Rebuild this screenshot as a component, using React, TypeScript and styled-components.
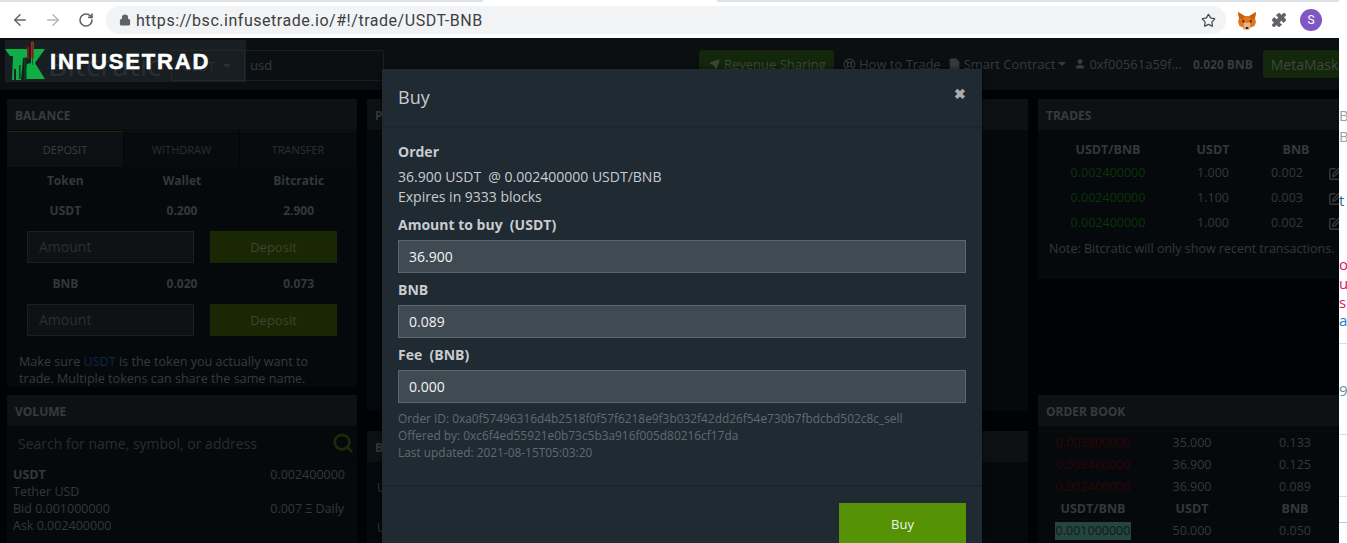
import styled, { createGlobalStyle } from 'styled-components'
import {
  ArrowLeft,
  ArrowRight,
  RotateCw,
  Lock,
  Star,
  Puzzle,
  Send,
  LifeBuoy,
  FileText,
  User,
  Search,
  SquarePen,
} from 'lucide-react'

const GlobalStyle = createGlobalStyle`
  html, body {
    margin: 0;
    padding: 0;
    width: 1347px;
    height: 543px;
    overflow: hidden;
    background: #fff;
    font-family: "Open Sans", "Noto Sans", sans-serif;
  }
  * { box-sizing: border-box; }
`

const Root = styled.div`
  position: relative;
  width: 1347px;
  height: 543px;
  overflow: hidden;
`

/* browser chrome */
const TabStrip = styled.div`
  display: flex;
  height: 2px;
  width: 1339px;
`
const StripPart = styled.div<{ $w: number; $white?: boolean }>`
  width: ${({ $w }) => $w}px;
  background: ${({ $white }) => ($white ? '#fff' : '#dee1e6')};
`
const Toolbar = styled.div`
  display: flex;
  align-items: center;
  height: 36px;
  background: #fff;
  padding-left: 11px;
  color: #5f6368;
`
const NavIcon = styled.div<{ $faded?: boolean }>`
  display: flex;
  justify-content: center;
  width: 18px;
  margin-right: 15px;
  color: ${({ $faded }) => ($faded ? '#b4b7ba' : '#5f6368')};
`
const UrlBar = styled.div`
  display: flex;
  align-items: center;
  width: 1120px;
  height: 28px;
  margin-left: -4px;
  padding: 0 10px 0 13px;
  border-radius: 14px;
  background: #f1f3f4;
`
const UrlText = styled.span`
  margin-left: 5px;
  flex: 1;
  font-family: Roboto, sans-serif;
  font-size: 16px;
  letter-spacing: 0.53px;
  color: #3c4043;
`
const ExtIcons = styled.div`
  display: flex;
  align-items: center;
  margin-left: 11px;
`
const FoxSlot = styled.div`
  display: flex;
  width: 20px;
  margin-right: 14px;
`
const PuzzleSlot = styled.div`
  display: flex;
  width: 16px;
  margin-right: 13px;
  color: #5f6368;
`
const Avatar = styled.div`
  display: flex;
  align-items: center;
  justify-content: center;
  width: 22px;
  height: 22px;
  border-radius: 50%;
  background: #7e57c2;
  color: #fff;
  font-family: Roboto, sans-serif;
  font-size: 12px;
`

/* page behind the dialog */
const Stage = styled.div`
  display: flex;
  height: 505px;
`
const Page = styled.div`
  width: 1339px;
  height: 505px;
  overflow: hidden;
  background: #000306;
`
const Sliver = styled.div`
  width: 8px;
  height: 505px;
  overflow: hidden;
  background: #fff;
  font-family: "Open Sans", sans-serif;
  font-size: 15px;
  white-space: nowrap;
`
const SliverText = styled.div<{ $gap: number; $color: string }>`
  height: 18px;
  line-height: 18px;
  margin-top: ${({ $gap }) => $gap}px;
  color: ${({ $color }) => $color};
`
const SliverRule = styled.div<{ $gap: number; $color: string }>`
  height: 1px;
  margin-top: ${({ $gap }) => $gap}px;
  background: ${({ $color }) => $color};
`

const Nav = styled.div`
  display: flex;
  align-items: flex-start;
  height: 52px;
  padding: 12px 0 0 48px;
  background: #0b0f12;
  color: #363b3e;
  white-space: nowrap;
`
const BrandText = styled.div`
  width: 123px;
  font-size: 30px;
  line-height: 30px;
  color: #24292c;
`
const PickBox = styled.div`
  display: flex;
  align-items: center;
  gap: 8px;
  width: 74px;
  height: 31px;
  padding-left: 10px;
  border: 1px solid #1a1f22;
  border-radius: 3px 0 0 3px;
  font-size: 13px;
  color: #24292c;
`
const Caret = styled.span`
  border-top: 4px solid currentColor;
  border-left: 4px solid transparent;
  border-right: 4px solid transparent;
`
const SearchBox = styled.div`
  width: 139px;
  height: 31px;
  padding-left: 5px;
  border: 1px solid #1a1f22;
  border-left: 0;
  border-radius: 0 3px 3px 0;
  font-size: 13px;
  line-height: 29px;
  color: #363b3e;
`
const NavRight = styled.div`
  display: flex;
  align-items: center;
  margin-left: 315px;
  font-size: 13px;
  height: 28px;
`
const GreenBtn = styled.div<{ $w: number; $size?: number; $ml?: number }>`
  display: flex;
  align-items: center;
  gap: 4px;
  flex: none;
  width: ${({ $w }) => $w}px;
  height: 28px;
  margin-left: ${({ $ml }) => $ml ?? 0}px;
  padding-left: ${({ $ml }) => ($ml ? 8 : 10)}px;
  border-radius: 3px;
  background: #13280a;
  font-size: ${({ $size }) => $size ?? 13}px;
  color: #3b4740;
  overflow: hidden;
`
const NavLink = styled.span<{ $ml: number }>`
  display: inline-flex;
  align-items: center;
  gap: 3px;
  margin-left: ${({ $ml }) => $ml}px;
`
const NavBold = styled.span`
  margin-left: 11px;
  font-size: 12px;
  font-weight: 700;
`

const Columns = styled.div`
  display: grid;
  grid-template-columns: 350px 661px 301px;
  column-gap: 10px;
  padding: 9px 0 0 7px;
`
const Column = styled.div`
  display: flex;
  flex-direction: column;
`
const Panel = styled.div<{ $h: number; $mt?: number }>`
  height: ${({ $h }) => $h}px;
  margin-top: ${({ $mt }) => $mt ?? 0}px;
  background: #06090c;
  overflow: hidden;
  flex: none;
`
const PanelHead = styled.div`
  height: 32px;
  padding: 1px 0 0 8px;
  background: #0e1113;
  border-bottom: 1px solid #050709;
  font-size: 12px;
  font-weight: 700;
  line-height: 31px;
  color: #363b3e;
`
const Tabs = styled.div`
  display: grid;
  grid-template-columns: 117px 116px 117px;
  height: 35px;
  border-bottom: 1px solid #030507;
`
const TabItem = styled.div<{ $active?: boolean }>`
  text-align: center;
  font-size: 11px;
  line-height: 35px;
  color: ${({ $active }) => ($active ? '#3a3f42' : '#2a2e31')};
  background: ${({ $active }) => ($active ? '#0c1012' : '#080b0e')};
  border-top: 1px solid ${({ $active }) => ($active ? '#1c2a08' : '#0e1113')};
  border-right: 1px solid #030507;
`
const BalanceGrid = styled.div`
  display: grid;
  grid-template-columns: repeat(3, 1fr);
  text-align: center;
  font-size: 12px;
  font-weight: 700;
  color: #33383b;
`
const BalanceCell = styled.div<{ $h: number }>`
  height: ${({ $h }) => $h}px;
  line-height: ${({ $h }) => $h}px;
`
const DepositRow = styled.div`
  display: flex;
  gap: 16px;
  padding: 0 0 0 20px;
  margin: 5px 0;
`
const AmountBox = styled.div`
  width: 167px;
  height: 32px;
  padding-left: 11px;
  border: 1px solid #1a1f23;
  background: #0e1215;
  font-size: 14px;
  line-height: 30px;
  color: #2a2f33;
`
const DepositBtn = styled.div`
  width: 127px;
  height: 32px;
  background: #1a2704;
  text-align: center;
  font-size: 13px;
  line-height: 32px;
  color: #3c4633;
`
const Note = styled.div`
  margin-top: 17px;
  padding-left: 12px;
  font-size: 12.6px;
  line-height: 17px;
  color: #363b3e;
`
const NoteLink = styled.span`
  color: #0c2a45;
`
const SearchRow = styled.div`
  display: flex;
  align-items: center;
  justify-content: space-between;
  height: 35px;
  padding: 0 3px 2px 11px;
  border-bottom: 1px solid #030507;
  font-size: 14px;
  color: #292d30;
`
const MagIcon = styled.span`
  display: flex;
  color: #1c2a08;
`
const VolumeRows = styled.div`
  display: grid;
  grid-template-columns: 1fr auto;
  padding: 4px 12px 0 6px;
  font-size: 12.5px;
  line-height: 17px;
  color: #33383b;
`
const Strong = styled.span`
  font-weight: 700;
`
const CutRow = styled.div<{ $gap: number }>`
  margin-top: ${({ $gap }) => $gap}px;
  padding-left: 10px;
  font-size: 12px;
  line-height: 17px;
  color: #33383b;
`
const DataTable = styled.table<{ $w: number; $mt: number }>`
  width: ${({ $w }) => $w}px;
  margin-top: ${({ $mt }) => $mt}px;
  table-layout: fixed;
  border-collapse: collapse;
  font-size: 12.5px;
  color: #33383b;
`
const TableCol = styled.col<{ $w: number }>`
  width: ${({ $w }) => $w}px;
`
const Th = styled.th<{ $h: number; $pl?: number }>`
  height: ${({ $h }) => $h}px;
  padding: 0 0 0 ${({ $pl }) => $pl ?? 0}px;
  font-weight: 700;
  font-size: 12.5px;
  color: #33383b;
  white-space: nowrap;
`
const Td = styled.td<{ $h: number; $color?: string }>`
  height: ${({ $h }) => $h}px;
  padding: 0;
  text-align: center;
  border-top: 1px solid #090c0f;
  color: ${({ $color }) => $color ?? '#33383b'};
`
const EditCell = styled(Td)`
  text-align: left;
  padding-left: 2px;
`
const TradeNote = styled.div`
  padding: 0 0 0 11px;
  border-top: 1px solid #090c0f;
  font-size: 12.5px;
  line-height: 25px;
  white-space: nowrap;
  color: #33383b;
`
const Highlight = styled.span`
  display: inline-block;
  padding: 0 1px;
  line-height: 18px;
  background: #264540;
  color: #0c1a18;
`
const EditIcon = styled.span`
  display: inline-flex;
  vertical-align: middle;
  color: #33383b;
`

/* faded site logo overlay */
const LogoStrip = styled.div`
  position: absolute;
  left: 5px;
  top: 40px;
  width: 241px;
  height: 42px;
  display: flex;
  align-items: center;
  background: rgba(52, 62, 68, 0.32);
`
const LogoMark = styled.div`
  display: flex;
`
const LogoWord = styled.span`
  margin-left: 3px;
  margin-top: 2px;
  font-family: "Liberation Sans", Arial, sans-serif;
  font-size: 22px;
  font-weight: 700;
  letter-spacing: 1.85px;
  color: #fff;
  -webkit-text-stroke: 0.5px #fff;
`

/* dialog */
const Dialog = styled.div`
  position: absolute;
  left: 382px;
  top: 69px;
  width: 600px;
  height: 490px;
  background: #1f2a33;
  color: #d2d5d7;
  box-shadow: 0 0 6px rgba(0, 0, 0, 0.5);
`
const DialogHead = styled.div`
  display: flex;
  justify-content: space-between;
  height: 59px;
  padding: 15px 16px 0;
  border-bottom: 2px solid #1b252d;
`
const DialogTitle = styled.div`
  font-size: 18px;
  line-height: 27px;
  color: #c9cccf;
`
const CloseX = styled.span`
  font-size: 14px;
  line-height: 20px;
  font-weight: 700;
  color: #a9adb0;
`
const DialogBody = styled.div`
  padding: 14px 16px 0;
  height: 359px;
  border-bottom: 2px solid #1b252d;
  font-size: 14px;
`
const FieldLabel = styled.div<{ $mt: number }>`
  margin-top: ${({ $mt }) => $mt}px;
  font-size: 14px;
  line-height: 20px;
  font-weight: 700;
  color: #c9cccf;
`
const OrderLine = styled.div<{ $mt?: number }>`
  margin-top: ${({ $mt }) => $mt ?? 0}px;
  line-height: 20px;
  color: #c9cccf;
`
const FieldBox = styled.div`
  height: 33px;
  margin-top: 5px;
  padding-left: 10px;
  border: 1px solid #5a6770;
  background: #3f4a53;
  line-height: 31px;
  color: #f2f3f4;
`
const Meta = styled.div`
  margin-top: 7px;
  font-size: 11.9px;
  line-height: 17px;
  color: #5f6a71;
`
const DialogFoot = styled.div`
  display: flex;
  justify-content: flex-end;
  padding: 16px 16px 0;
`
const BuyBtn = styled.div`
  width: 127px;
  height: 44px;
  background: #559205;
  text-align: center;
  font-size: 13px;
  line-height: 42px;
  color: #f0f3ec;
`

function Fox() {
  return (
    <svg width="20" height="19" viewBox="0 0 20 19">
      <path d="M1 1l6.5 4h5L19 1l-1 6 1 4-1.5 4-4 1.5-1.5 2h-5L6 16.5 2.500 15 1 11l1-4z" fill="#e2761b" />
      <path d="M1 1l6.500 4L6 9 2 7zM19 1l-6.500 4L14 9l4-2z" fill="#c65f12" />
      <path d="M7 11l3 1 3-1 .5 5-1.500 2H8l-1.500-2z" fill="#e8b48c" />
      <path d="M5 9l3 1-2 2zM15 9l-3 1 2 2z" fill="#33261d" />
      <path d="M8.500 16h3l-.5 2H9z" fill="#33261d" />
    </svg>
  )
}

function Mark() {
  return (
    <svg width="42" height="40" viewBox="0 0 42 40">
      <path d="M0 8h24v8l-6 1-2 22H7l1-24H5z" fill="#0fae47" />
      <path d="M26 8h14L30 22l10 16H19l3-15 4-1z" fill="#0fae47" />
      <rect x="26" y="1" width="3" height="16" fill="#c9191e" />
      <rect x="27" y="0" width="1" height="24" fill="#0b5d26" />
      <rect x="22" y="6" width="2" height="12" fill="#7a1a1c" />
      <rect x="19" y="17" width="2.500" height="22" fill="#0a3d1b" />
      <rect x="9" y="28" width="2" height="11" fill="#1b2a22" />
      <rect x="14" y="24" width="1.500" height="14" fill="#0a3d1b" />
    </svg>
  )
}

export default function App() {
  return (
    <Root>
      <GlobalStyle />
      <TabStrip>
        <StripPart $w={483} />
        <StripPart $w={234} $white />
        <StripPart $w={622} />
      </TabStrip>
      <Toolbar>
        <NavIcon>
          <ArrowLeft size={18} strokeWidth={2} />
        </NavIcon>
        <NavIcon $faded>
          <ArrowRight size={18} strokeWidth={2} />
        </NavIcon>
        <NavIcon>
          <RotateCw size={16} strokeWidth={2.4} />
        </NavIcon>
        <UrlBar>
          <Lock size={12} fill="#5f6368" strokeWidth={2.4} />
          <UrlText>https://bsc.infusetrade.io/#!/trade/USDT-BNB</UrlText>
          <Star size={15} strokeWidth={2} color="#4a4d50" />
        </UrlBar>
        <ExtIcons>
          <FoxSlot>
            <Fox />
          </FoxSlot>
          <PuzzleSlot>
            <Puzzle size={16} fill="#5f6368" strokeWidth={1} />
          </PuzzleSlot>
          <Avatar>S</Avatar>
        </ExtIcons>
      </Toolbar>
      <Stage>
        <Page>
          <Nav>
            <BrandText>Bitcratic</BrandText>
            <PickBox>
              USDT <Caret />
            </PickBox>
            <SearchBox>usd</SearchBox>
            <NavRight>
              <GreenBtn $w={135}>
                <Send size={11} fill="currentColor" />
                Revenue Sharing
              </GreenBtn>
              <NavLink $ml={9}>
                <LifeBuoy size={13} />
                How to Trade
              </NavLink>
              <NavLink $ml={7}>
                <FileText size={13} fill="currentColor" />
                Smart Contract
                <Caret />
              </NavLink>
              <NavLink $ml={8}>
                <User size={12} fill="currentColor" />
                0xf00561a59f...
              </NavLink>
              <NavBold>0.020 BNB</NavBold>
              <GreenBtn $w={76} $size={14} $ml={10}>
                MetaMask
              </GreenBtn>
            </NavRight>
          </Nav>
          <Columns>
            <Column>
              <Panel $h={288}>
                <PanelHead>BALANCE</PanelHead>
                <Tabs>
                  <TabItem $active>DEPOSIT</TabItem>
                  <TabItem>WITHDRAW</TabItem>
                  <TabItem>TRANSFER</TabItem>
                </Tabs>
                <BalanceGrid>
                  <BalanceCell $h={30}>Token</BalanceCell>
                  <BalanceCell $h={30}>Wallet</BalanceCell>
                  <BalanceCell $h={30}>Bitcratic</BalanceCell>
                  <BalanceCell $h={30}>USDT</BalanceCell>
                  <BalanceCell $h={30}>0.200</BalanceCell>
                  <BalanceCell $h={30}>2.900</BalanceCell>
                </BalanceGrid>
                <DepositRow>
                  <AmountBox>Amount</AmountBox>
                  <DepositBtn>Deposit</DepositBtn>
                </DepositRow>
                <BalanceGrid>
                  <BalanceCell $h={31}>BNB</BalanceCell>
                  <BalanceCell $h={31}>0.020</BalanceCell>
                  <BalanceCell $h={31}>0.073</BalanceCell>
                </BalanceGrid>
                <DepositRow>
                  <AmountBox>Amount</AmountBox>
                  <DepositBtn>Deposit</DepositBtn>
                </DepositRow>
                <Note>
                  Make sure <NoteLink>USDT</NoteLink> is the token you actually want to
                  <br />
                  trade. Multiple tokens can share the same name.
                </Note>
              </Panel>
              <Panel $h={160} $mt={8}>
                <PanelHead>VOLUME</PanelHead>
                <SearchRow>
                  Search for name, symbol, or address
                  <MagIcon>
                    <Search size={22} strokeWidth={3} />
                  </MagIcon>
                </SearchRow>
                <VolumeRows>
                  <Strong>USDT</Strong>
                  <span>0.002400000</span>
                  <span>Tether USD</span>
                  <span />
                  <span>Bid 0.001000000</span>
                  <span>0.007 Ξ Daily</span>
                  <span>Ask 0.002400000</span>
                  <span />
                </VolumeRows>
              </Panel>
            </Column>
            <Column>
              <Panel $h={312}>
                <PanelHead>PRICE</PanelHead>
                <Tabs />
              </Panel>
              <Panel $h={120} $mt={20}>
                <PanelHead>BUY</PanelHead>
                <CutRow $gap={16}>USDT</CutRow>
                <CutRow $gap={23}>USDT</CutRow>
              </Panel>
            </Column>
            <Column>
              <Panel $h={180}>
                <PanelHead>TRADES</PanelHead>
                <DataTable $w={328} $mt={9}>
                  <colgroup>
                    <TableCol $w={140} />
                    <TableCol $w={70} />
                    <TableCol $w={78} />
                    <TableCol $w={40} />
                  </colgroup>
                  <thead>
                    <tr>
                      <Th $h={20}>USDT/BNB</Th>
                      <Th $h={20}>USDT</Th>
                      <Th $h={20} $pl={18}>BNB</Th>
                      <Th $h={20} />
                    </tr>
                  </thead>
                  <tbody>
                    {['1.000|0.002', '1.100|0.003', '1.000|0.002'].map((row, i) => {
                      const [qty, total] = row.split('|')
                      return (
                        <tr key={i}>
                          <Td $h={25} $color="#0a3308">0.002400000</Td>
                          <Td $h={25}>{qty}</Td>
                          <Td $h={25}>{total}</Td>
                          <EditCell $h={25}>
                            <EditIcon>
                              <SquarePen size={14} strokeWidth={2.5} />
                            </EditIcon>
                          </EditCell>
                        </tr>
                      )
                    })}
                  </tbody>
                </DataTable>
                <TradeNote>Note: Bitcratic will only show recent transactions.</TradeNote>
              </Panel>
              <Panel $h={160} $mt={116}>
                <PanelHead>ORDER BOOK</PanelHead>
                <DataTable $w={316} $mt={4}>
                  <colgroup>
                    <TableCol $w={110} />
                    <TableCol $w={88} />
                    <TableCol $w={118} />
                  </colgroup>
                  <tbody>
                    {[
                      ['0.003800000', '35.000', '0.133'],
                      ['0.003400000', '36.900', '0.125'],
                      ['0.002400000', '36.900', '0.089'],
                    ].map((row) => (
                      <tr key={row[0]}>
                        <Td $h={22} $color="#2e0507">{row[0]}</Td>
                        <Td $h={22}>{row[1]}</Td>
                        <Td $h={22}>{row[2]}</Td>
                      </tr>
                    ))}
                    <tr>
                      <Th $h={22}>USDT/BNB</Th>
                      <Th $h={22}>USDT</Th>
                      <Th $h={22}>BNB</Th>
                    </tr>
                    <tr>
                      <Td $h={22}>
                        <Highlight>0.001000000</Highlight>
                      </Td>
                      <Td $h={22}>50.000</Td>
                      <Td $h={22}>0.050</Td>
                    </tr>
                  </tbody>
                </DataTable>
              </Panel>
            </Column>
          </Columns>
        </Page>
        <Sliver>
          <SliverText $gap={68} $color="#9aa0a6">B8</SliverText>
          <SliverText $gap={3} $color="#9aa0a6">B7</SliverText>
          <SliverText $gap={46} $color="#2a6f97">t</SliverText>
          <SliverText $gap={46} $color="#e0115f">o</SliverText>
          <SliverText $gap={1} $color="#e0115f">u</SliverText>
          <SliverText $gap={1} $color="#e0115f">s</SliverText>
          <SliverText $gap={0} $color="#0d7fd1">ar</SliverText>
          <SliverRule $gap={14} $color="#d8dde0" />
          <SliverText $gap={37} $color="#5b8fb0">9</SliverText>
          <SliverRule $gap={35} $color="#d8dde0" />
          <SliverRule $gap={61} $color="#d8dde0" />
          <SliverRule $gap={25} $color="#a9cdea" />
        </Sliver>
      </Stage>
      <LogoStrip>
        <LogoMark>
          <Mark />
        </LogoMark>
        <LogoWord>INFUSETRAD</LogoWord>
      </LogoStrip>
      <Dialog>
        <DialogHead>
          <DialogTitle>Buy</DialogTitle>
          <CloseX>✖</CloseX>
        </DialogHead>
        <DialogBody>
          <FieldLabel $mt={0}>Order</FieldLabel>
          <OrderLine $mt={5}>36.900 USDT&nbsp; @ 0.002400000 USDT/BNB</OrderLine>
          <OrderLine>Expires in 9333 blocks</OrderLine>
          <FieldLabel $mt={8}>Amount to buy&nbsp; (USDT)</FieldLabel>
          <FieldBox>36.900</FieldBox>
          <FieldLabel $mt={7}>BNB</FieldLabel>
          <FieldBox>0.089</FieldBox>
          <FieldLabel $mt={7}>Fee&nbsp; (BNB)</FieldLabel>
          <FieldBox>0.000</FieldBox>
          <Meta>
            Order ID: 0xa0f57496316d4b2518f0f57f6218e9f3b032f42dd26f54e730b7fbdcbd502c8c_sell
            <br />
            Offered by: 0xc6f4ed55921e0b73c5b3a916f005d80216cf17da
            <br />
            Last updated: 2021-08-15T05:03:20
          </Meta>
        </DialogBody>
        <DialogFoot>
          <BuyBtn>Buy</BuyBtn>
        </DialogFoot>
      </Dialog>
    </Root>
  )
}
